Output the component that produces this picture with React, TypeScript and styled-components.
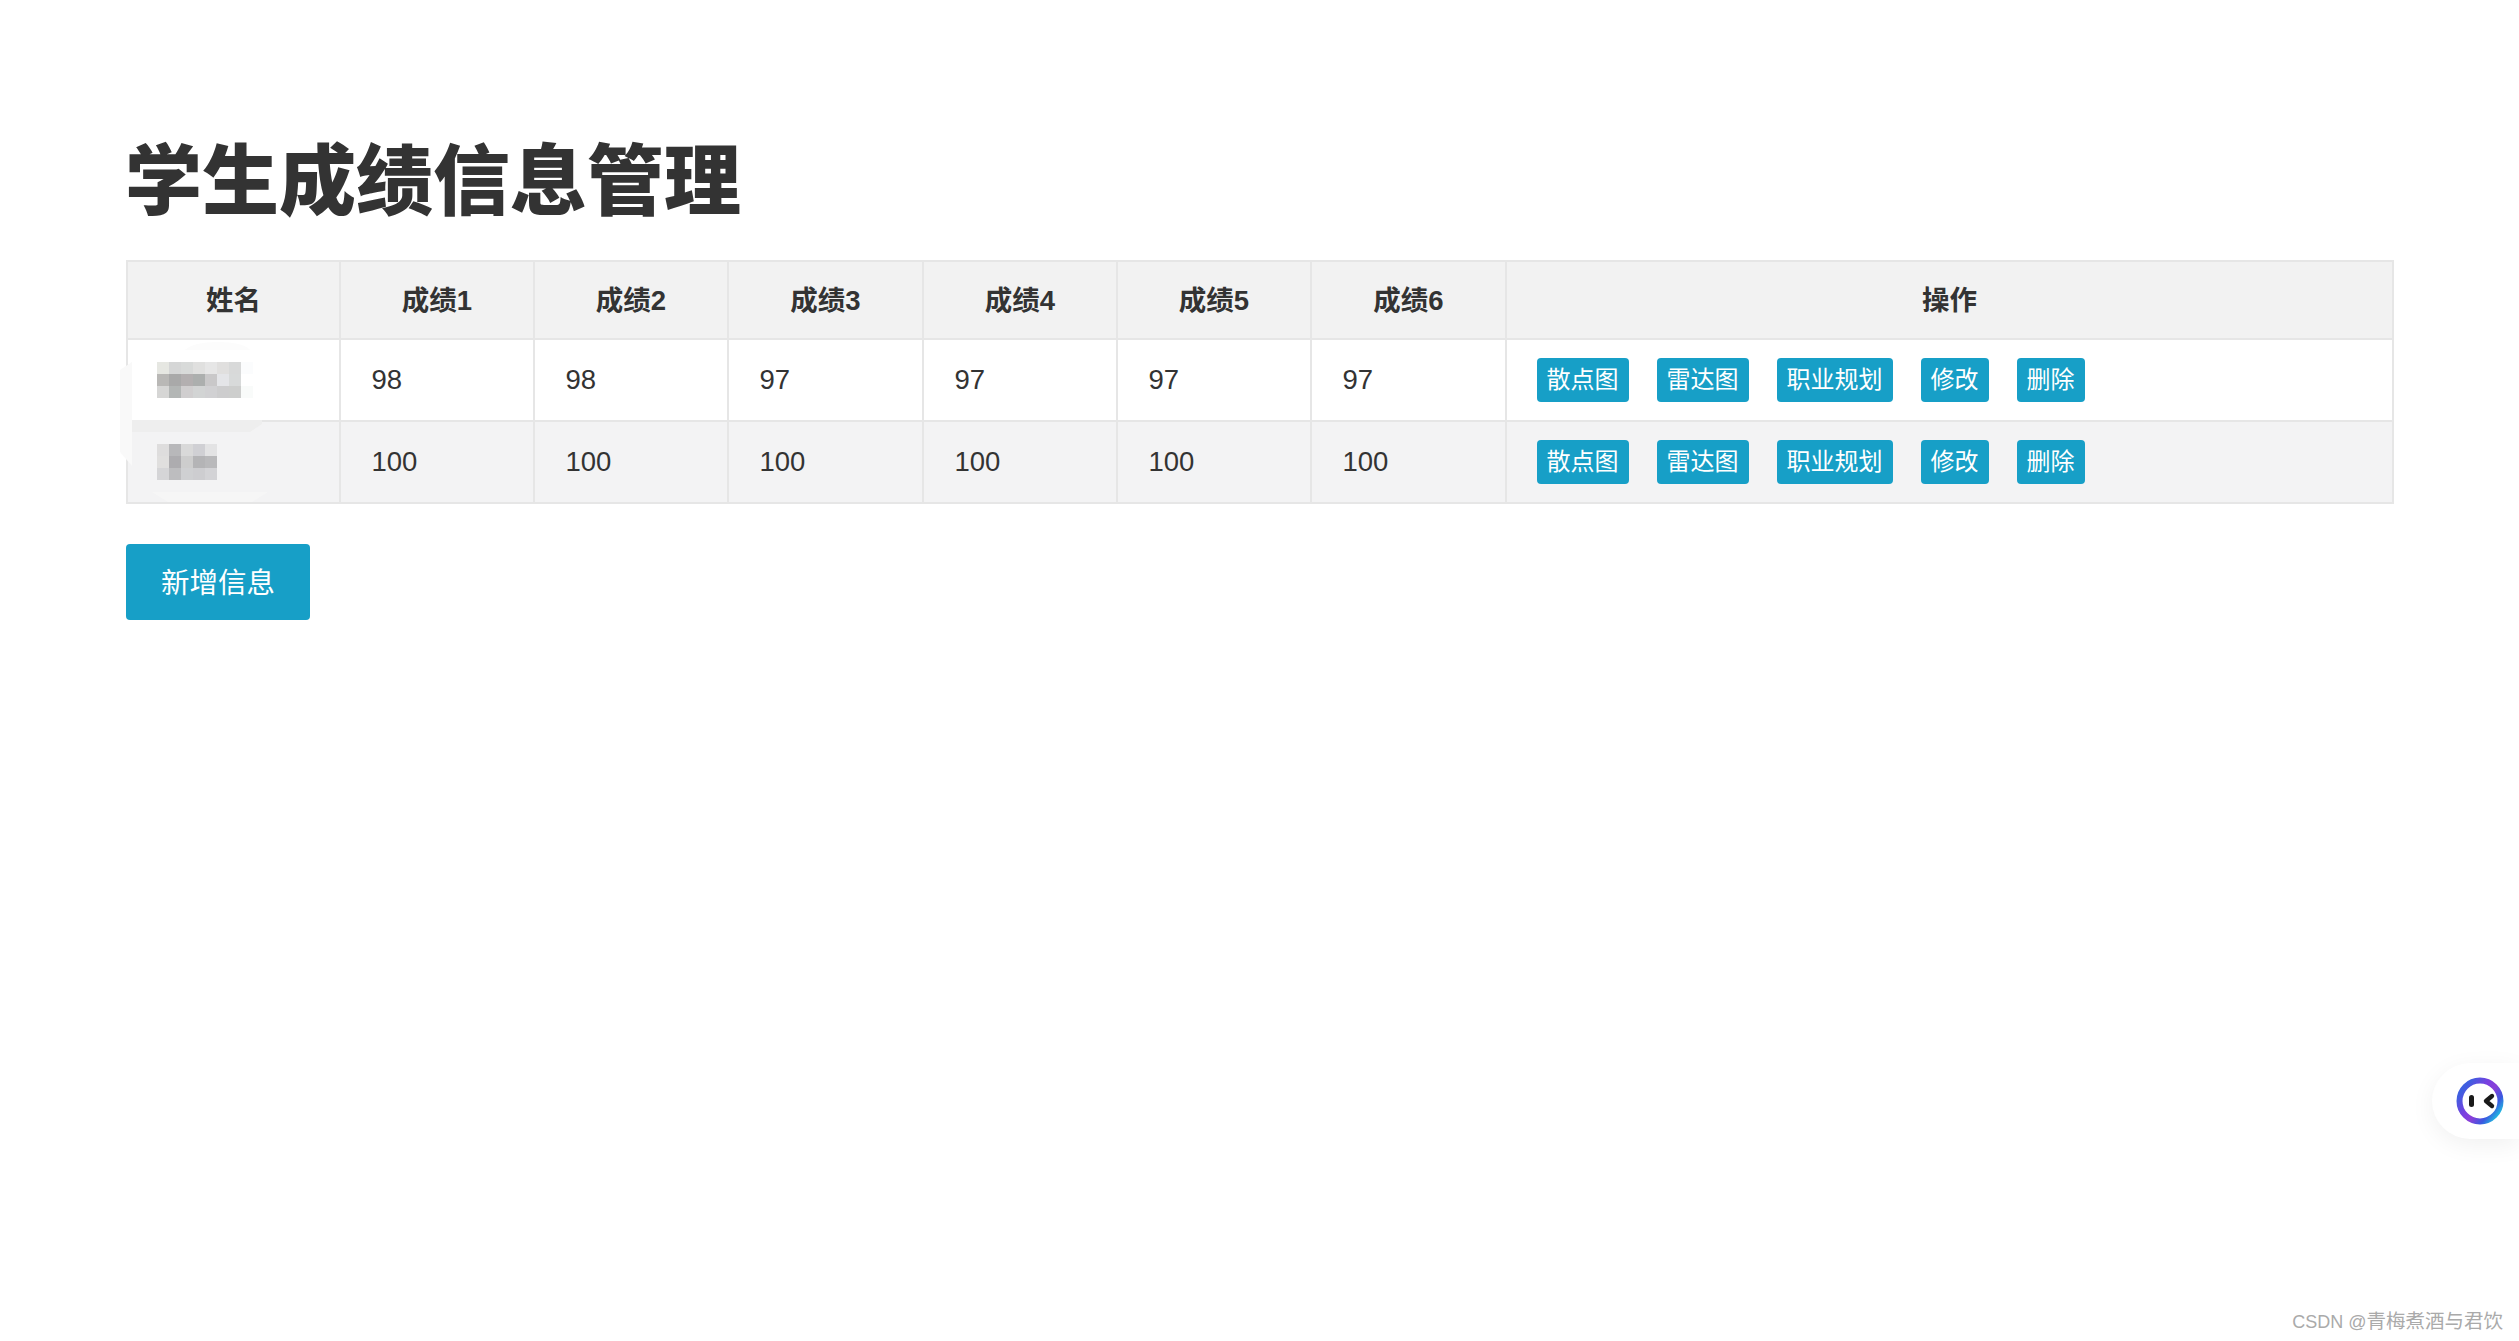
import React from "react";
import styled, { createGlobalStyle } from "styled-components";

const Global = createGlobalStyle`
  html, body { margin: 0; padding: 0; background: #fff; }
  body {
    font-family: "Liberation Sans", "Noto Sans CJK SC", sans-serif;
    color: #333;
    overflow: hidden;
  }
`;

const Page = styled.div`
  position: relative;
  width: 2519px;
  height: 1341px;
  box-sizing: border-box;
  padding: 124px 125px 0 126px;
`;

const Title = styled.h1`
  margin: 0 0 26px -1px;
  height: 110px;
  font-size: 77px;
  line-height: 116px;
  font-weight: 900;
  color: #333;
`;

const TableWrap = styled.div`
  position: relative;
  width: 2266px;
`;

const Table = styled.table`
  width: 2266px;
  table-layout: fixed;
  border-collapse: collapse;
`;

const Col = styled.col<{ $w: number }>`
  width: ${(p) => p.$w}px;
`;

const HeadRow = styled.tr`
  height: 78px;
  background: #f2f2f2;
`;

const Row = styled.tr<{ $striped?: boolean }>`
  height: 82px;
  background: ${(p) => (p.$striped ? "#f3f3f4" : "#fff")};
`;

const Th = styled.th`
  border: 2px solid #e6e6e6;
  padding: 0 0 5px;
  font-size: 27.5px;
  font-weight: 700;
  color: #333;
  text-align: center;
`;

const Td = styled.td`
  border: 2px solid #e6e6e6;
  padding: 0 0 0 30.5px;
  font-size: 27.5px;
  color: #333;
`;

const Actions = styled.div`
  display: flex;
  gap: 28px;
  margin-left: -1px;
`;

const SmallButton = styled.button`
  height: 44px;
  padding: 0 10px;
  border: 0;
  border-radius: 4px;
  background: #179fc7;
  color: #fff;
  font-family: inherit;
  font-size: 24px;
  line-height: 44px;
  white-space: nowrap;
`;

const AddButton = styled.button`
  display: block;
  width: 184px;
  height: 76px;
  margin-top: 40px;
  padding: 0 0 3px;
  border: 0;
  border-radius: 4px;
  background: #179fc7;
  color: #fff;
  font-family: inherit;
  font-size: 28.5px;
`;

const Mosaic = styled.svg`
  display: block;
  margin-left: -2px;
`;

const Smudge = styled.svg`
  position: absolute;
  left: -8px;
  top: 78px;
  pointer-events: none;
`;

const Assistant = styled.div`
  position: absolute;
  right: 0;
  top: 1063px;
  width: 87px;
  height: 76px;
  display: flex;
  align-items: center;
  padding-left: 24px;
  box-sizing: border-box;
  background: #fff;
  border-radius: 38px 0 0 38px;
  box-shadow: 0 6px 24px rgba(0, 0, 0, 0.06);
`;

const Watermark = styled.div`
  position: absolute;
  right: 16px;
  bottom: 6px;
  font-size: 19.5px;
  line-height: 26px;
  color: #aaa;
  white-space: nowrap;
`;

const Latin = styled.span`
  font-size: 18px;
`;

const mosaicA = [
  ["#e6e7e2", "#d5d6d6", "#d8dad9", "#e0e0df", "#e6e6e6", "#e0dfde", "#d8d9d9", "#fbfcfd"],
  ["#b9b8b6", "#a9a9a9", "#b3afb0", "#acafae", "#c9c8c9", "#e4e5e8", "#d8dada", "#ffffff"],
  ["#d6d6d5", "#b3b6b5", "#d0cecf", "#d2d4d4", "#d1d1d3", "#cdcdce", "#cdcecd", "#f9fbfa"],
];
const mosaicB = [
  ["#dedddd", "#b8b8ba", "#d9d9d9", "#d0d0d4", "#e3e3e4"],
  ["#e0dfde", "#adacaf", "#cdcdcd", "#b4b4b6", "#b9b9bb"],
  ["#d5d5d7", "#bdbdbf", "#cfd0d2", "#cdcdd0", "#d3d3d6"],
];

function NameMosaic({ cells }: { cells: string[][] }) {
  const w = cells[0].length * 12;
  return (
    <Mosaic width={w} height={36} viewBox={`0 0 ${w} 36`} shapeRendering="crispEdges">
      {cells.map((row, y) =>
        row.map((c, x) => <rect key={`${x}-${y}`} x={x * 12} y={y * 12} width={12} height={12} fill={c} />)
      )}
    </Mosaic>
  );
}

function AssistantIcon() {
  return (
    <svg width="48" height="48" viewBox="0 0 48 48">
      <defs>
        <linearGradient id="ring" x1="0.1" y1="0.2" x2="0.95" y2="0.85">
          <stop offset="0" stopColor="#3f5fe0" />
          <stop offset="0.35" stopColor="#7a3fe0" />
          <stop offset="0.55" stopColor="#8a3fd8" />
          <stop offset="0.8" stopColor="#3a58e0" />
          <stop offset="1" stopColor="#22b8e0" />
        </linearGradient>
      </defs>
      <circle cx="24" cy="24" r="20.5" fill="#fff" stroke="url(#ring)" strokeWidth="6" />
      <rect x="13" y="18" width="5" height="12" rx="2.5" fill="#1a1a1a" />
      <path d="M36 19 L30 24 L36 29" fill="none" stroke="#1a1a1a" strokeWidth="4.4" strokeLinecap="round" strokeLinejoin="round" />
    </svg>
  );
}

const buttons = ["散点图", "雷达图", "职业规划", "修改", "删除"];
const heads = ["成绩1", "成绩2", "成绩3", "成绩4", "成绩5", "成绩6"];
const widths = [213, 194, 194, 195, 194, 194, 195, 887];
const rows = [
  { cells: mosaicA, scores: [98, 98, 97, 97, 97, 97], striped: false },
  { cells: mosaicB, scores: [100, 100, 100, 100, 100, 100], striped: true },
];

export default function App() {
  return (
    <Page>
      <Global />
      <Title>学生成绩信息管理</Title>
      <TableWrap>
        <Table>
          <colgroup>
            {widths.map((w, i) => (
              <Col key={i} $w={w} />
            ))}
          </colgroup>
          <thead>
            <HeadRow>
              <Th>姓名</Th>
              {heads.map((h) => (
                <Th key={h}>{h}</Th>
              ))}
              <Th>操作</Th>
            </HeadRow>
          </thead>
          <tbody>
            {rows.map((r, i) => (
              <Row key={i} $striped={r.striped}>
                <Td>
                  <NameMosaic cells={r.cells} />
                </Td>
                {r.scores.map((s, j) => (
                  <Td key={j}>{s}</Td>
                ))}
                <Td>
                  <Actions>
                    {buttons.map((b) => (
                      <SmallButton key={b}>{b}</SmallButton>
                    ))}
                  </Actions>
                </Td>
              </Row>
            ))}
          </tbody>
        </Table>
        <Smudge width="170" height="170" viewBox="0 0 170 170">
          <path d="M2 32 L14 24 L14 128 L2 114 Z" fill="#f9f9f9" />
          <path d="M67 12 Q75 4 100 4 Q125 4 132 12 Z" fill="#fcfcfc" />
          <path d="M14 82 L144 82 L144 86 L132 94 L14 94 Z" fill="#eeeeee" />
          <path d="M34 154 L150 154 L134 164 L50 164 Z" fill="#f6f6f6" />
        </Smudge>
      </TableWrap>
      <AddButton>新增信息</AddButton>
      <Assistant>
        <AssistantIcon />
      </Assistant>
      <Watermark>
        <Latin>CSDN @</Latin>青梅煮酒与君饮
      </Watermark>
    </Page>
  );
}
